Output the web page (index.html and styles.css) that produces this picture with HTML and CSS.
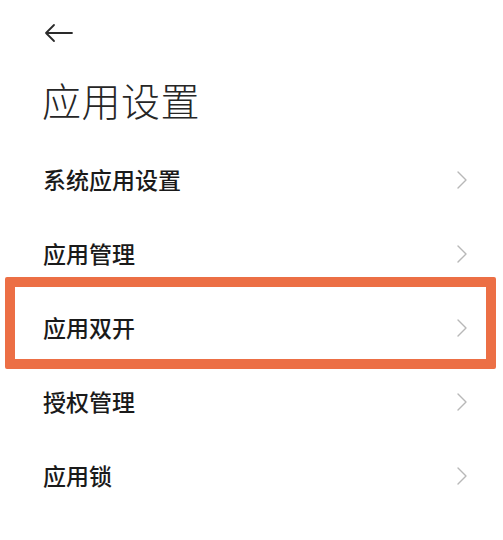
FILE: index.html
```html
<!DOCTYPE html>
<html lang="zh-CN">
<head>
<meta charset="utf-8">
<title>应用设置</title>
<link rel="stylesheet" href="styles.css">
</head>
<body>
<div class="page">
  <header class="topbar">
    <svg class="back" width="30" height="20" viewBox="0 0 30 20" aria-label="返回">
      <path d="M2 10 H28 M10 2 L2 10 L10 18" fill="none" stroke="#2a2a2a" stroke-width="1.8" stroke-linecap="round" stroke-linejoin="round"/>
    </svg>
  </header>
  <h1 class="title">应用设置</h1>
  <ul class="list">
    <li class="row"><span class="label">系统应用设置</span><svg class="chev" width="10" height="18" viewBox="0 0 10 18"><path d="M1 1 L9 9 L1 17" fill="none" stroke="#b8b8b8" stroke-width="1.4" stroke-linecap="round" stroke-linejoin="round"/></svg></li>
    <li class="row"><span class="label">应用管理</span><svg class="chev" width="10" height="18" viewBox="0 0 10 18"><path d="M1 1 L9 9 L1 17" fill="none" stroke="#b8b8b8" stroke-width="1.4" stroke-linecap="round" stroke-linejoin="round"/></svg></li>
    <li class="row highlighted"><span class="label">应用双开</span><svg class="chev" width="10" height="18" viewBox="0 0 10 18"><path d="M1 1 L9 9 L1 17" fill="none" stroke="#b8b8b8" stroke-width="1.4" stroke-linecap="round" stroke-linejoin="round"/></svg><span class="mark"></span></li>
    <li class="row"><span class="label">授权管理</span><svg class="chev" width="10" height="18" viewBox="0 0 10 18"><path d="M1 1 L9 9 L1 17" fill="none" stroke="#b8b8b8" stroke-width="1.4" stroke-linecap="round" stroke-linejoin="round"/></svg></li>
    <li class="row"><span class="label">应用锁</span><svg class="chev" width="10" height="18" viewBox="0 0 10 18"><path d="M1 1 L9 9 L1 17" fill="none" stroke="#b8b8b8" stroke-width="1.4" stroke-linecap="round" stroke-linejoin="round"/></svg></li>
  </ul>
</div>
</body>
</html>
```
FILE: styles.css
```css
html, body {
  margin: 0;
  padding: 0;
  background: #ffffff;
}
body {
  font-family: "Noto Sans CJK SC", "Noto Sans", sans-serif;
  color: #1a1a1a;
}
.page {
  width: 503px;
  height: 540px;
  overflow: hidden;
  background: #ffffff;
}
.topbar {
  height: 66px;
  display: flex;
  align-items: center;
  padding-left: 44px;
}
.back {
  display: block;
}
.title {
  margin: 7px 0 0 0;
  padding-left: 42px;
  font-size: 39px;
  line-height: 52px;
  font-weight: 300;
  color: #262626;
  letter-spacing: 0.5px;
}
.list {
  list-style: none;
  margin: 19px 0 0 0;
  padding: 0;
}
.row {
  position: relative;
  height: 74px;
  display: flex;
  align-items: center;
  justify-content: space-between;
  padding: 0 36px 0 43px;
}
.label {
  font-size: 23px;
  line-height: 30px;
  margin-top: -5px;
  font-weight: 500;
  color: #1a1a1a;
}
.chev {
  display: block;
  margin-top: -2px;
}
.mark {
  position: absolute;
  top: -15px;
  bottom: -3px;
  left: 5px;
  right: 7px;
  border: 10px solid #ec6f45;
  border-radius: 2px;
  pointer-events: none;
}
```
